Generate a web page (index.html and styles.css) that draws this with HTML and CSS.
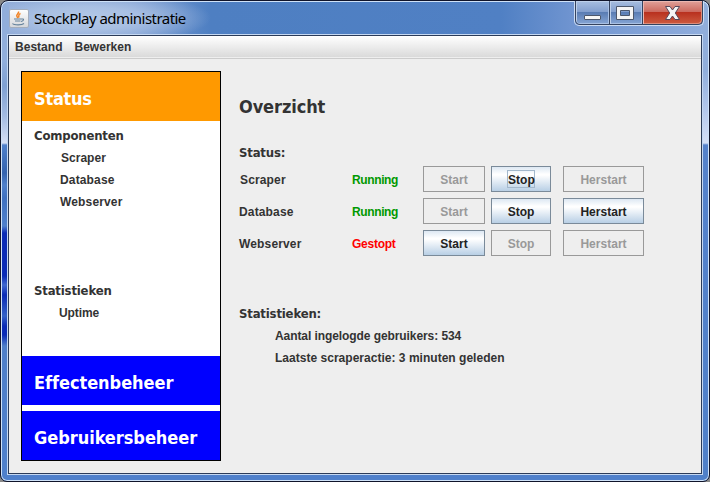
FILE: index.html
```html
<!DOCTYPE html>
<html lang="nl">
<head>
<meta charset="utf-8">
<title>StockPlay administratie</title>
<link rel="stylesheet" href="styles.css">
</head>
<body>
<div class="window">
  <header class="titlebar">
    <svg class="app-icon" width="20" height="19" viewBox="0 0 20 19">
      <defs><linearGradient id="tile" x1="0" y1="0" x2="0" y2="1"><stop offset="0" stop-color="#fff"/><stop offset="1" stop-color="#d4d6da"/></linearGradient></defs>
      <rect x=".5" y=".5" width="19" height="18" rx="1.5" fill="url(#tile)" stroke="#a3adbd"/>
      <path d="M9.500 2.500C10.500 4.500 6.500 5 8 7.500L9 9M11.500 4.500C8.500 5.500 10.500 7 9.500 8.500" fill="none" stroke="#f08224" stroke-width="1.500"/>
      <path d="M5 10H12.500M6 12H11.500M12.500 10C15.500 9.500 15 12 12 12.500M3.500 14.500C5 16.300 13 16.300 15 14.500" fill="none" stroke="#64829c" stroke-width="1.100"/>
    </svg>
    <h1 class="title">StockPlay administratie</h1>
    <div class="controls">
      <span class="control minimize"><svg width="34" height="23"><rect x="8.500" y="14.500" width="16" height="4" rx=".5" fill="#f6f6f6" stroke="#4c576b"/></svg></span>
      <span class="control maximize"><svg width="32" height="23"><path d="M6.500 5.500H23.500V18.500H6.500ZM10.500 9.500V14.500H19.500V9.500Z" fill="#f4f4f4" fill-rule="evenodd" stroke="#4c576b"/></svg></span>
      <span class="control close"><svg width="58" height="23"><path d="M22.500 5.500H27L29.500 9L32 5.500H36.500L32.300 12L36.500 18.500H32L29.500 15L27 18.500H22.500L26.700 12Z" fill="#f5f5f5" stroke="#57485a"/></svg></span>
    </div>
  </header>
  <div class="client">
    <nav class="menubar"><span>Bestand</span><span>Bewerken</span></nav>
    <div class="body">
      <aside class="sidebar">
        <h2 class="tab active">Status</h2>
        <div class="tree">
          <section class="components">
            <h3>Componenten</h3>
            <p class="first">Scraper</p>
            <p>Database</p>
            <p>Webserver</p>
          </section>
          <section>
            <h3>Statistieken</h3>
            <p class="uptime">Uptime</p>
          </section>
        </div>
        <h2 class="tab effects">Effectenbeheer</h2>
        <h2 class="tab users">Gebruikersbeheer</h2>
      </aside>
      <main class="overview">
        <h2>Overzicht</h2>
        <h3>Status:</h3>
        <div class="services">
          <span class="name nudge">Scraper</span><span class="running">Running</span>
          <button disabled>Start</button><button><span class="focus">Stop</span></button><button class="restart" disabled>Herstart</button>
          <span class="name">Database</span><span class="running">Running</span>
          <button disabled>Start</button><button>Stop</button><button class="restart">Herstart</button>
          <span class="name">Webserver</span><span class="stopped">Gestopt</span>
          <button>Start</button><button disabled>Stop</button><button class="restart" disabled>Herstart</button>
        </div>
        <h3 class="stats-title">Statistieken:</h3>
        <p class="logins">Aantal ingelogde gebruikers: 534</p>
        <p>Laatste scraperactie: 3 minuten geleden</p>
      </main>
    </div>
  </div>
</div>
</body>
</html>
```
FILE: styles.css
```css
* { box-sizing: border-box; }

body {
  margin: 0;
  width: 710px;
  height: 482px;
  overflow: hidden;
  background: #8a8a8a;
  color: #333;
  font: bold 12px/22px "Liberation Sans", Arial, sans-serif;
  letter-spacing: .02px;
}

h1, h2, h3, p { margin: 0; }

.window {
  height: 482px;
  padding: 0 6px 6px;
  border: 1px solid #10142a;
  border-radius: 8px 8px 7px 7px;
  box-shadow: inset 0 0 0 1px #cfe2f8;
  background:
    linear-gradient(#91aedb 0, #91aedb 60px, #7fa0d2 85px, #a3bbe2 115px, #d5dff5 142px, #4f80cb 144px, #3563ae 172px, #4f80cb 184px, #3f70bf 197px, #4f80cb 225px, #0a2bb5 232px, #0a2bb5 275px, #3f69cf 284px, #0a2bb5 294px, #3563c8 315px, #0a2bb5 325px, #0a2bb5 334px, #4f7fc9 345px, #4f80cb 100%) 0 0 / 8px 100% no-repeat,
    linear-gradient(#91aedb 0, #91aedb 70px, #b4c8ec 110px, #d5e0f7 142px, #5582cb 144px, #4f80c9 100%) 100% 0 / 8px 100% no-repeat,
    linear-gradient(#4f80cb, #4f80cb) 0 100% / 100% 8px no-repeat,
    radial-gradient(ellipse 125px 28px at 85px 17px, #b3c8e7 0, #a9c0e3 40%, transparent 100%),
    linear-gradient(90deg, #8aa6d5 0, #7e9fd3 130px, #4e7fc2 210px, #5080c4 500px, #6f94d0 570px, #91aedd 100%);
}

.titlebar {
  display: flex;
  height: 33px;
  padding-left: 2px;
}

.app-icon { margin-top: 8px; }

.title {
  flex: 1;
  margin-left: 5px;
  color: #000;
  font: 15px/35px "Noto Sans", "Open Sans", sans-serif;
  letter-spacing: -.54px;
}

.controls {
  display: flex;
  width: 130px;
  height: 25px;
  margin-right: -1px;
  border: 1px solid #cddcf2;
  border-top: 0;
  border-radius: 0 0 5px 5px;
}

.control {
  width: 33px;
  border-right: 1px solid #35435f;
  border-bottom: 1px solid #35435f;
  background: linear-gradient(#a7bee0 0, #839fce 46%, #587bb2 48%, #86a5d4 100%);
  box-shadow: inset 1px 1px #bed0ea, inset -1px -1px #a9c0e3;
}

.control svg { display: block; }
.minimize { width: 35px; border-radius: 0 0 0 5px; border-left: 1px solid #35435f; }
.close {
  flex: 1;
  border-radius: 0 0 5px;
  background: linear-gradient(#e0a19a 0, #cc6b60 46%, #b8301e 48%, #cd5b40 100%);
  box-shadow: inset 1px 1px #eab7b0, inset -1px -1px #dc8c7b;
}

.client {
  height: 441px;
  border: 1px solid #c5d8f2;
  box-shadow: inset 0 0 0 1px #2b3b58;
  padding: 1px;
  background: #eee;
  background-clip: content-box;
}

.menubar {
  display: flex;
  gap: 12px;
  height: 23px;
  padding-left: 6px;
  border-bottom: 1px solid #ccc;
  background: linear-gradient(#fff, #dadada 21px, #eee 21px);
}

.body { display: flex; padding: 12px 0 0 12px; }

.sidebar {
  width: 200px;
  height: 390px;
  border: 1px solid #000;
  background: #fff;
}

h2, h3 { font-family: "DejaVu Sans Condensed", "DejaVu Sans", sans-serif; }
h3 { font-size: 13px; line-height: 22px; letter-spacing: -.18px; }

.tab {
  height: 49px;
  padding: 1px 0 0 12px;
  color: #fff;
  background: #00f;
  font-size: 18px;
  line-height: 52px;
  letter-spacing: -.05px;
}

.active { background: #f90; letter-spacing: -.25px; }
.users { margin-top: 6px; }

.tree { height: 235px; padding: 4px 12px 0; }
.tree p { padding-left: 26px; letter-spacing: .15px; }
.tree .first { padding-left: 27px; letter-spacing: .02px; }
.tree .uptime { padding-left: 25px; letter-spacing: -.1px; }
.components { height: 155px; }

.overview { padding: 22px 0 0 18px; }
.overview h2 { font-size: 18px; line-height: 28px; letter-spacing: -.1px; }
.overview h3 { margin-top: 21px; }

.services {
  display: grid;
  grid-template-columns: 107px 65px 62px 66px 81px;
  grid-template-rows: repeat(3, 26px);
  gap: 6px;
  margin-top: 2px;
  line-height: 28px;
}

.name { letter-spacing: .15px; }
.nudge { padding-left: 1px; }
.running, .stopped { letter-spacing: -.38px; }
.running { color: #090; }
.stopped { color: #f00; letter-spacing: -.25px; }

button {
  width: 62px;
  padding: 0;
  border: 1px solid #7a8a99;
  background: linear-gradient(#dde8f3 0, #fff 30%, #fff 34%, #b8cfe5 100%);
  color: #222;
  font: inherit;
  line-height: 26px;
  letter-spacing: .02px;
}

button:nth-child(5n + 4) { width: 60px; }
button:disabled { border-color: #999; background: none; color: #999; }
.restart { width: 81px; }

.focus {
  display: inline-block;
  width: 28px;
  height: 18px;
  border: 1px solid #a3b8cc;
  line-height: 18px;
}

.overview .stats-title { margin-top: 47px; }
.overview p { padding-left: 36px; }
.overview .logins { letter-spacing: -.08px; }
```
